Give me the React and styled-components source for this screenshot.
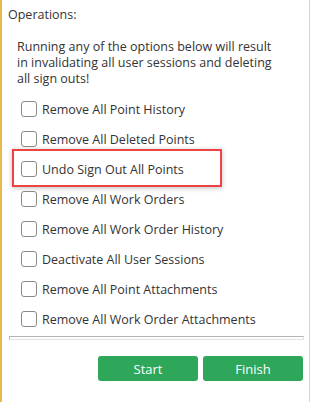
import React, { useState } from 'react';
import styled, { createGlobalStyle } from 'styled-components';

const GlobalStyle = createGlobalStyle`
  html, body {
    margin: 0;
    padding: 0;
    background: #fff;
  }
  body {
    font-family: "Open Sans", "Noto Sans", sans-serif;
    color: #333;
  }
`;

const Panel = styled.div`
  box-sizing: border-box;
  width: 310px;
  height: 402px;
  border-left: 2px solid #e7b94f;
  border-right: 1px solid #d4d4d4;
  padding: 6px 0 0 6px;
  font-size: 12.5px;
`;

const Title = styled.div`
  line-height: 18px;
  margin-bottom: 15px;
`;

const Warning = styled.p`
  margin: 0 0 0 9px;
  width: 264px;
  line-height: 16px;
`;

const OptionList = styled.ul`
  list-style: none;
  margin: 7px 0 0 4px;
  padding: 0;
  display: flex;
  flex-direction: column;
`;

const Option = styled.li`
  position: relative;
  display: flex;
  align-items: center;
  height: 30px;
  width: 210px;
  padding-left: 9px;
  box-sizing: border-box;
  cursor: pointer;

  /* red annotation frame drawn over the row */
  &::before {
    content: '';
    display: ${(p) => (p.$highlight ? 'block' : 'none')};
    position: absolute;
    top: -5px;
    bottom: -3px;
    left: 0;
    right: 0;
    border: 2px solid #ef4343;
    box-shadow: 0 1px 5px rgba(0, 0, 0, 0.25);
    pointer-events: none;
  }
`;

const Box = styled.span`
  box-sizing: border-box;
  width: 16px;
  height: 16px;
  border: 1px solid #8a8a8a;
  border-radius: 3px;
  background: #fff;
  margin-right: 5px;
  flex-shrink: 0;
  display: flex;
  align-items: center;
  justify-content: center;
  color: #2ea75a;
  font-size: 12px;
`;

const Label = styled.span`
  white-space: nowrap;
`;

const Divider = styled.hr`
  box-sizing: border-box;
  margin: 2px 0 0 1px;
  width: 295px;
  height: 4px;
  border-top: 1px solid #b5b5b5;
  border-left: 1px solid #b5b5b5;
  border-bottom: 1px solid #e2e2e2;
  border-right: 1px solid #e2e2e2;
`;

const Actions = styled.div`
  display: flex;
  justify-content: flex-end;
  gap: 5px;
  margin-top: 16px;
  padding-right: 6px;
`;

const Button = styled.button`
  width: 100px;
  height: 25px;
  border: none;
  border-radius: 3px;
  background: #2ea75a;
  color: #fff;
  font-family: "Open Sans", "Noto Sans", sans-serif;
  font-size: 13px;
  cursor: pointer;
`;

const options = [
  'Remove All Point History',
  'Remove All Deleted Points',
  'Undo Sign Out All Points',
  'Remove All Work Orders',
  'Remove All Work Order History',
  'Deactivate All User Sessions',
  'Remove All Point Attachments',
  'Remove All Work Order Attachments',
];

function App() {
  const [checked, setChecked] = useState({});

  const toggle = (i) => setChecked({ ...checked, [i]: !checked[i] });

  return (
    <Panel>
      <GlobalStyle />
      <Title>Operations:</Title>
      <Warning>
        Running any of the options below will result in invalidating all user sessions and deleting all sign outs!
      </Warning>
      <OptionList>
        {options.map((o, i) => (
          <Option key={i} $highlight={i === 2} onClick={() => toggle(i)}>
            <Box>{checked[i] ? '✓' : ''}</Box>
            <Label>{o}</Label>
          </Option>
        ))}
      </OptionList>
      <Divider />
      <Actions>
        <Button>Start</Button>
        <Button>Finish</Button>
      </Actions>
    </Panel>
  );
}

export default App;
